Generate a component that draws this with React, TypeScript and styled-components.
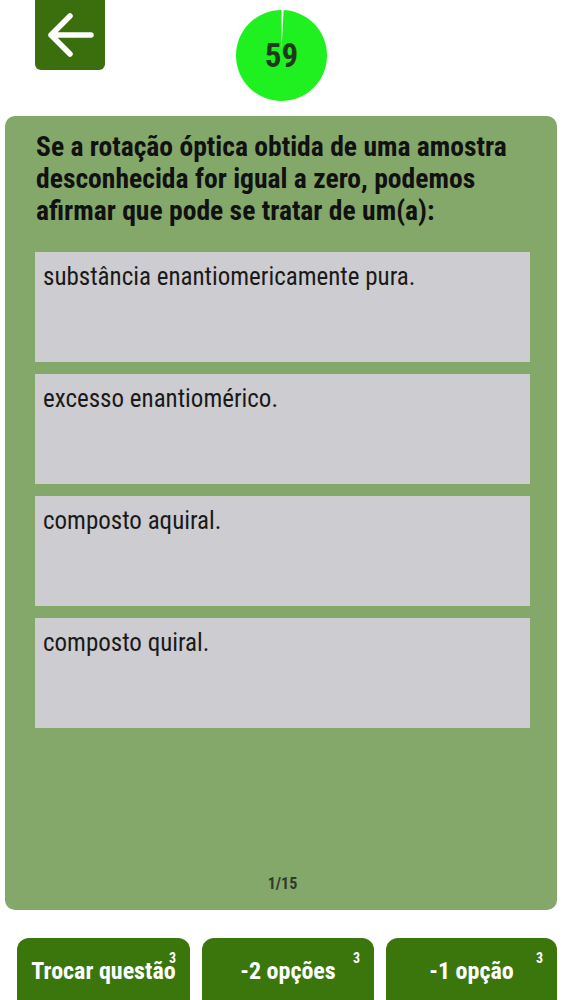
import styled, { createGlobalStyle } from 'styled-components';

const GlobalStyle = createGlobalStyle`
  html, body {
    margin: 0;
    padding: 0;
    background: #ffffff;
    font-family: "Roboto Condensed", Roboto, "DejaVu Sans", sans-serif;
  }
  #root {
    height: 1000px;
    overflow: hidden;
  }
`;

const options = [
  'substância enantiomericamente pura.',
  'excesso enantiomérico.',
  'composto aquiral.',
  'composto quiral.',
];

const hints = [
  { label: 'Trocar questão', count: 3 },
  { label: '-2 opções', count: 3 },
  { label: '-1 opção', count: 3 },
];

const Page = styled.div`
  display: flex;
  flex-direction: column;
  height: 1000px;
  & > * {
    flex-shrink: 0;
  }
`;

const Header = styled.header`
  display: grid;
  grid-template-columns: 1fr auto 1fr;
  align-items: start;
  height: 116px;
`;

const BackButton = styled.button`
  width: 70px;
  height: 70px;
  margin-left: 35px;
  border: none;
  border-radius: 0 0 6px 6px;
  background: #3b6e0c;
  display: grid;
  place-items: center;
  padding: 0;
  cursor: pointer;
`;

const Timer = styled.div`
  position: relative;
  width: 91px;
  height: 91px;
  margin-top: 10px;
  display: grid;
  place-items: center;

  svg {
    position: absolute;
    inset: 0;
  }
`;

const TimerValue = styled.span`
  position: relative;
  font-size: 33px;
  font-weight: 700;
  color: #1d3a1d;
  line-height: 1;
`;

const Card = styled.main`
  margin: 0 6px 0 5px;
  height: 794px;
  box-sizing: border-box;
  background: #84a76a;
  border-radius: 10px;
  padding: 15px 27px 17px 30px;
  display: flex;
  flex-direction: column;
`;

const Question = styled.h1`
  margin: 0 0 25px 1px;
  font-size: 27.6px;
  line-height: 32px;
  font-weight: 700;
  color: #111;
`;

const OptionList = styled.div`
  display: flex;
  flex-direction: column;
  gap: 12px;
`;

const Option = styled.button`
  height: 110px;
  border: none;
  border-radius: 0;
  background: #cdccd0;
  text-align: left;
  display: flex;
  align-items: flex-start;
  padding: 10px 8px;
  font-family: inherit;
  font-size: 25px;
  line-height: 30px;
  color: #1a1a1a;
  cursor: pointer;
`;

const Counter = styled.div`
  margin-top: auto;
  text-align: center;
  font-size: 16px;
  font-weight: 700;
  color: #2e3b2b;
`;

const HintBar = styled.nav`
  display: grid;
  grid-template-columns: 173px 172px 171px;
  gap: 12px;
  padding: 28px 6px 0 17px;
`;

const HintButton = styled.button`
  position: relative;
  height: 80px;
  border: none;
  border-radius: 12px 12px 0 0;
  background: #3a760b;
  color: #fff;
  display: flex;
  justify-content: center;
  align-items: flex-start;
  padding: 19px 0 0;
  font-family: inherit;
  font-size: 24px;
  font-weight: 700;
  line-height: 28px;
  cursor: pointer;
`;

const HintCount = styled.sup`
  position: absolute;
  top: 13px;
  right: 14px;
  font-size: 14px;
  font-weight: 700;
  line-height: 1;
`;

const BackArrow = () => (
  <svg width="48" height="46" viewBox="0 0 48 46" fill="none">
    <path
      d="M45 23H5M24 4L5 23L24 42"
      stroke="#fff"
      strokeWidth="5.5"
      strokeLinecap="round"
      strokeLinejoin="round"
    />
  </svg>
);

const TimerPie = ({ left, total }: { left: number; total: number }) => {
  const r = 45.5;
  const c = 45.5;
  const a = (1 - left / total) * 2 * Math.PI * 0.45;
  const x = c + r * Math.sin(a);
  const y = c - r * Math.cos(a);
  return (
    <svg width="91" height="91" viewBox="0 0 91 91">
      <circle cx={c} cy={c} r={r} fill="#1ff01f" />
      <path d={`M${c} ${c - 6}L${c} 0A${r} ${r} 0 0 1 ${x} ${y}Z`} fill="#fff" />
    </svg>
  );
};

export default function App() {
  return (
    <>
      <GlobalStyle />
      <Page>
        <Header>
          <BackButton aria-label="Voltar">
            <BackArrow />
          </BackButton>
          <Timer>
            <TimerPie left={59} total={60} />
            <TimerValue>59</TimerValue>
          </Timer>
          <div />
        </Header>
        <Card>
          <Question>
            Se a rotação óptica obtida de uma amostra desconhecida for igual a zero, podemos
            afirmar que pode se tratar de um(a):
          </Question>
          <OptionList>
            {options.map((o) => (
              <Option key={o}>{o}</Option>
            ))}
          </OptionList>
          <Counter>1/15</Counter>
        </Card>
        <HintBar>
          {hints.map((h) => (
            <HintButton key={h.label}>
              {h.label}
              <HintCount>{h.count}</HintCount>
            </HintButton>
          ))}
        </HintBar>
      </Page>
    </>
  );
}
